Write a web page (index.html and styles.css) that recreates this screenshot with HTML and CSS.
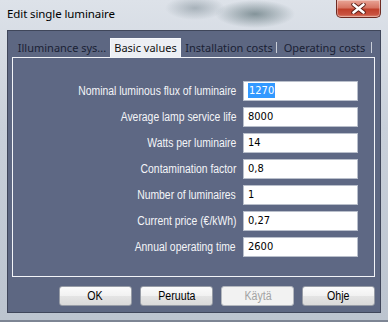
FILE: index.html
```html
<!DOCTYPE html>
<html lang="en">
<head>
    <meta charset="UTF-8">
    <title>Edit single luminaire</title>
    <link rel="stylesheet" href="styles.css">
</head>
<body>
    <div class="window">
        <div class="titlebar">
            <span class="title">Edit single luminaire</span>
            <div class="close-btn">
                <svg width="15" height="11" viewBox="0 0 15 11">
                    <path d="M2.5 1.5 L12.5 9.5 M12.5 1.5 L2.5 9.5" stroke="#5a1c14" stroke-width="4.4" stroke-linecap="round"/>
                    <path d="M2.5 1.5 L12.5 9.5 M12.5 1.5 L2.5 9.5" stroke="#fff" stroke-width="2.6" stroke-linecap="round"/>
                </svg>
            </div>
        </div>

        <div class="client">
            <div class="tabs">
                <div class="tab tab-ill">Illuminance sys...</div>
                <div class="tab tab-basic active">Basic values</div>
                <div class="tab tab-inst sep">Installation costs</div>
                <div class="tab tab-oper sep">Operating costs</div>
            </div>

            <div class="panel">
                <div class="form">
                    <label><span>Nominal luminous flux of luminaire</span></label>
                    <div class="field"><span class="selected">1270</span></div>

                    <label><span>Average lamp service life</span></label>
                    <div class="field">8000</div>

                    <label><span>Watts per luminaire</span></label>
                    <div class="field">14</div>

                    <label><span>Contamination factor</span></label>
                    <div class="field">0,8</div>

                    <label><span>Number of luminaires</span></label>
                    <div class="field">1</div>

                    <label><span>Current price (€/kWh)</span></label>
                    <div class="field">0,27</div>

                    <label><span>Annual operating time</span></label>
                    <div class="field">2600</div>
                </div>
            </div>

            <div class="buttons">
                <div class="btn"><span>OK</span></div>
                <div class="btn"><span>Peruuta</span></div>
                <div class="btn disabled"><span>Käytä</span></div>
                <div class="btn"><span>Ohje</span></div>
            </div>
        </div>
    </div>
</body>
</html>
```

FILE: styles.css
```css
body {
    margin: 0;
    padding: 0;
    background: #c4cbd6;
}
.window {
    width: 388px;
    height: 322px;
    overflow: hidden;
    background:
        radial-gradient(ellipse 40px 14px at 255px 14px, rgba(60, 85, 90, 0.55), rgba(60, 85, 90, 0) 100%),
        radial-gradient(ellipse 30px 12px at 195px 8px, rgba(70, 90, 100, 0.35), rgba(70, 90, 100, 0) 100%),
        linear-gradient(180deg, #dde2e9 0%, #c9d0da 40%, #bcc4cf 100%);
    display: flex;
    flex-direction: column;
    box-sizing: border-box;
    border-bottom: 2px solid #7d8594;
}
.titlebar {
    height: 30px;
    display: flex;
    align-items: flex-start;
    justify-content: space-between;
}
.title {
    font-family: "Noto Sans", sans-serif;
    font-size: 11.5px;
    color: #000;
    margin: 6px 0 0 7px;
    letter-spacing: -0.1px;
}
.close-btn {
    width: 45px;
    height: 18px;
    margin-right: 7px;
    box-sizing: border-box;
    border: 1px solid #6d2a22;
    border-top: 0;
    border-radius: 0 0 5px 5px;
    background: linear-gradient(180deg, #e9a597 0%, #d77563 45%, #c0402b 55%, #c95240 85%, #dd8a74 100%);
    box-shadow: inset 0 0 0 1px rgba(255, 255, 255, 0.35);
    display: flex;
    align-items: center;
    justify-content: center;
}
.client {
    flex: 1;
    margin: 0 7px 7px 7px;
    background: #5d6782;
    border: 1px solid #3f465a;
    padding: 7px 5px 5px 4px;
    display: flex;
    flex-direction: column;
}
.tabs {
    display: flex;
    height: 19px;
    margin-left: 2px;
}
.tab {
    font-family: "Noto Sans", sans-serif;
    font-size: 11px;
    color: #1a2134;
    text-align: center;
    line-height: 19px;
    box-sizing: border-box;
    white-space: nowrap;
}
.tab-ill {
    width: 96px;
}
.tab-basic {
    width: 71px;
}
.tab-inst {
    width: 96px;
}
.tab-oper {
    width: 95px;
}
.tab.active {
    background: #eceff4;
    border: 1px solid #f6f8fb;
    border-bottom: 0;
    line-height: 18px;
    color: #111;
}
.tab.sep {
    position: relative;
}
.tab.sep::after {
    content: "";
    position: absolute;
    right: 0;
    top: 4px;
    height: 11px;
    border-right: 1px solid #c9ced8;
}
.panel {
    height: 220px;
    box-sizing: border-box;
    border: 1px solid #f2f4f8;
    background: #5e6884;
}
.form {
    display: grid;
    grid-template-columns: 1fr 115px;
    grid-auto-rows: 20px;
    column-gap: 7px;
    row-gap: 6px;
    padding: 23px 16px 0 0;
}
.form label {
    font-family: "Liberation Sans", sans-serif;
    font-size: 12.5px;
    color: #f4f5f8;
    text-align: right;
    line-height: 20px;
    white-space: nowrap;
}
.form label span {
    display: inline-block;
    transform: scaleX(0.83);
    transform-origin: right center;
}
.field {
    background: #fff;
    border: 1px solid #b9bfcb;
    box-sizing: border-box;
    font-family: "DejaVu Sans Condensed", "DejaVu Sans", sans-serif;
    font-size: 11px;
    line-height: 18px;
    color: #000;
    padding-left: 4px;
}
.selected {
    background: #3399ff;
    color: #fff;
    padding: 1px 1px;
}
.buttons {
    display: flex;
    justify-content: flex-end;
    gap: 8px;
    margin-top: 9px;
}
.btn {
    width: 73px;
    height: 20px;
    box-sizing: border-box;
    border: 1px solid #979ca6;
    border-radius: 3px;
    background: linear-gradient(180deg, #fbfbfb 0%, #f1f1f1 50%, #e4e4e4 52%, #dadada 100%);
    font-family: "Liberation Sans", sans-serif;
    font-size: 12.5px;
    color: #000;
    text-align: center;
    line-height: 18px;
}
.btn span {
    display: inline-block;
    transform: scaleX(0.85);
}
.btn.disabled {
    background: #f2f2f2;
    border-color: #b3b7be;
    color: #a3a3a3;
}
```
